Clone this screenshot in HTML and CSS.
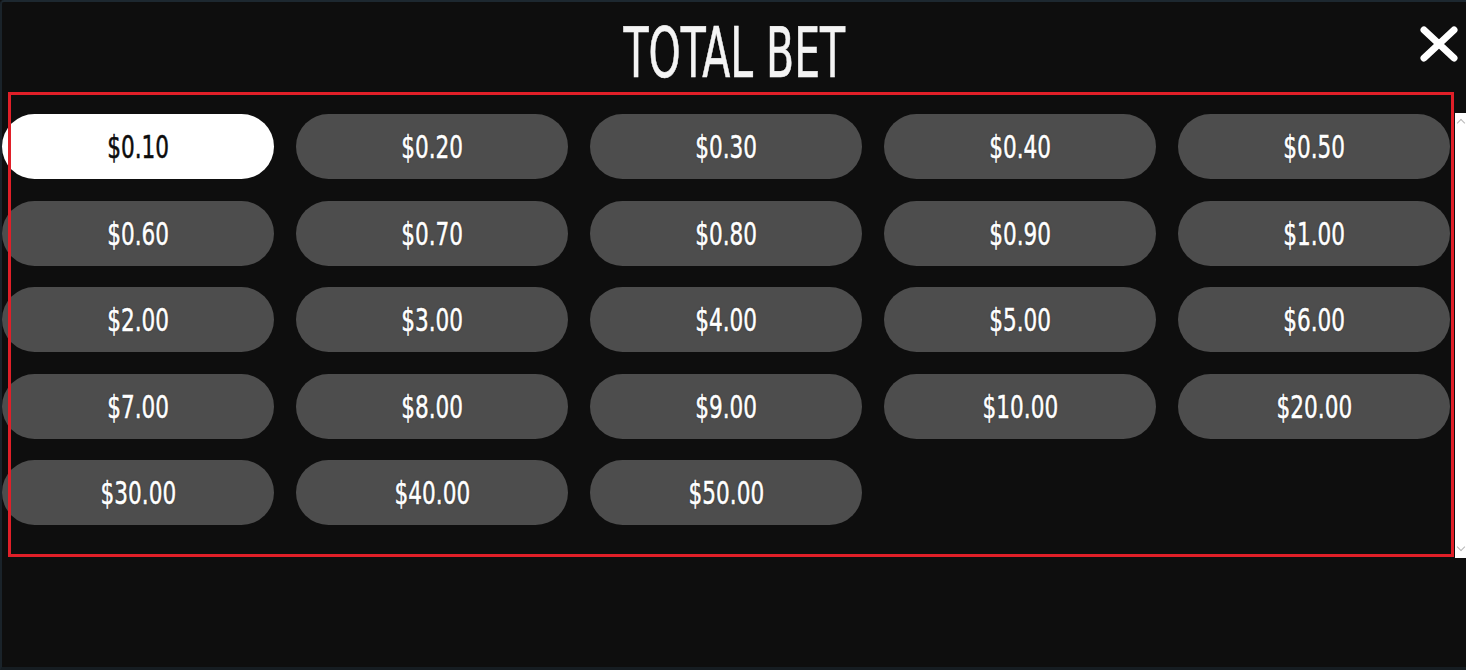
FILE: index.html
```html
<!DOCTYPE html>
<html lang="en">
<head>
<meta charset="utf-8">
<title>Total Bet</title>
<link rel="stylesheet" href="styles.css">
</head>
<body>
<div class="panel">
  <header class="header">
    <div class="spacer"></div>
    <h1 class="title"><span class="narrow">TOTAL BET</span></h1>
    <button class="close" aria-label="Close">
      <svg width="38" height="36" viewBox="0 0 38 36"><path d="M4 4 L34 32 M34 4 L4 32" stroke="#fff" stroke-width="7" stroke-linecap="round" fill="none"/></svg>
    </button>
  </header>
  <div class="scroll-area">
    <div class="bets">
      <button class="bet active"><span class="label">$0.10</span></button>
      <button class="bet"><span class="label">$0.20</span></button>
      <button class="bet"><span class="label">$0.30</span></button>
      <button class="bet"><span class="label">$0.40</span></button>
      <button class="bet"><span class="label">$0.50</span></button>
      <button class="bet"><span class="label">$0.60</span></button>
      <button class="bet"><span class="label">$0.70</span></button>
      <button class="bet"><span class="label">$0.80</span></button>
      <button class="bet"><span class="label">$0.90</span></button>
      <button class="bet"><span class="label">$1.00</span></button>
      <button class="bet"><span class="label">$2.00</span></button>
      <button class="bet"><span class="label">$3.00</span></button>
      <button class="bet"><span class="label">$4.00</span></button>
      <button class="bet"><span class="label">$5.00</span></button>
      <button class="bet"><span class="label">$6.00</span></button>
      <button class="bet"><span class="label">$7.00</span></button>
      <button class="bet"><span class="label">$8.00</span></button>
      <button class="bet"><span class="label">$9.00</span></button>
      <button class="bet"><span class="label">$10.00</span></button>
      <button class="bet"><span class="label">$20.00</span></button>
      <button class="bet"><span class="label">$30.00</span></button>
      <button class="bet"><span class="label">$40.00</span></button>
      <button class="bet"><span class="label">$50.00</span></button>
    </div>
    <div class="scrollbar">
      <span class="arrow up"></span>
      <span class="arrow down"></span>
    </div>
    <div class="highlight"></div>
  </div>
</div>
</body>
</html>
```
FILE: styles.css
```css
html, body {
  margin: 0;
  padding: 0;
  background: #0e0e0e;
}

body {
  width: 1466px;
  height: 670px;
  overflow: hidden;
  font-family: "DejaVu Sans Condensed", "DejaVu Sans", sans-serif;
  font-stretch: condensed;
}

.panel {
  box-sizing: border-box;
  height: 670px;
  background: #0e0e0e;
  border-top: 2px solid #1d2830;
  border-left: 2px solid #1a232a;
  border-bottom: 3px solid #161d22;
  border-top-left-radius: 4px;
}

.header {
  height: 111px;
  display: grid;
  grid-template-columns: 1fr auto 1fr;
  align-items: start;
}

.title {
  margin: 16px 0 0;
  font-size: 70px;
  line-height: 70px;
  font-weight: normal;
  color: #f4f4f4;
  text-align: center;
  white-space: nowrap;
  -webkit-text-stroke: 0.6px #f4f4f4;
}

.narrow {
  display: inline-block;
  transform: scaleX(0.65);
  transform-origin: center;
}

.close {
  justify-self: end;
  margin: 24px 8px 0 0;
  padding: 0;
  border: 0;
  background: none;
  width: 38px;
  height: 36px;
  display: flex;
  cursor: pointer;
}

.scroll-area {
  position: relative;
  display: flex;
  height: 445px;
  margin-left: -2px;
}

.bets {
  flex: 1;
  display: grid;
  grid-template-columns: repeat(5, 272px);
  grid-auto-rows: 65px;
  column-gap: 22px;
  row-gap: 21.5px;
  padding: 1px 0 0 2px;
  align-content: start;
}

.bet {
  border: 0;
  margin: 0;
  padding: 0;
  border-radius: 33px;
  background: #4d4d4d;
  color: #fff;
  font-family: inherit;
  font-stretch: condensed;
  font-size: 32px;
  line-height: 66px;
  text-align: center;
  cursor: pointer;
  text-shadow: 0 0 2px rgba(0, 0, 0, 0.6);
  -webkit-text-stroke: 0.5px currentColor;
}

.bet.active {
  background: #ffffff;
  color: #0c0c0c;
  text-shadow: none;
}

.label {
  display: inline-block;
  transform: scaleX(0.75);
}

.scrollbar {
  width: 11px;
  background: #ffffff;
  display: flex;
  flex-direction: column;
  justify-content: space-between;
  align-items: center;
  padding: 5px 0 6px;
  box-sizing: border-box;
}

.arrow {
  width: 5px;
  height: 5px;
  border-left: 1px solid #b8b8b8;
  border-top: 1px solid #b8b8b8;
}

.arrow.up {
  transform: translateY(2px) rotate(45deg);
}

.arrow.down {
  transform: translateY(-2px) rotate(225deg);
}

.highlight {
  position: absolute;
  left: 8px;
  top: -21px;
  width: 1446px;
  height: 465px;
  box-sizing: border-box;
  border: 3px solid #e01f28;
  pointer-events: none;
}
```
